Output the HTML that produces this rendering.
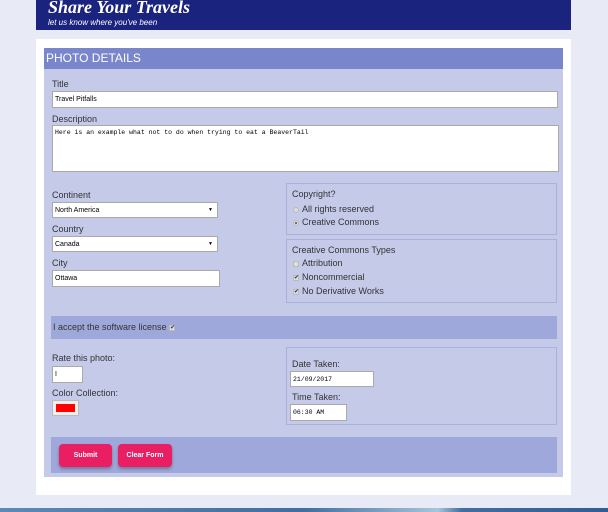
<!DOCTYPE html>
<html><head><meta charset="utf-8"><style>
*{margin:0;padding:0;box-sizing:border-box}
body{width:608px;height:512px;background:#e8eaf6;position:relative;overflow:hidden;font-family:"Liberation Sans",sans-serif;color:#333}
.a{position:absolute}
.lbl{position:absolute;font-size:9px;color:#333}
.inp{position:absolute;background:#fff;border:1px solid #aaa;font-size:7px;padding:0 2px;color:#000;display:flex;align-items:center}
.mono{font-family:"Liberation Mono",monospace;font-size:6.5px}
.ta{align-items:flex-start;padding-top:3px}
.fs{position:absolute;border:1px solid #aab0d8}
.opt{position:absolute;font-size:9px;color:#333}
.box{display:inline-block;width:6px;height:6px;background:#ddd;border:1px solid #bbb;margin-right:3px;vertical-align:middle;font-size:6px;line-height:5px;text-align:center}
.btn{position:absolute;background:#e91e63;color:#fff;font-size:7px;font-weight:bold;border-radius:4px;text-align:center;line-height:23px;box-shadow:0 2px 3px rgba(0,0,0,.3)}
.arr{position:absolute;right:4px;top:50%;transform:translateY(-50%);font-size:5px}
</style></head><body>
<div class="a" style="left:36px;top:0;width:535px;height:30px;background:#1a237e"></div>
<div class="a" style="left:48px;top:-3px;font:bold italic 18px 'Liberation Serif',serif;color:#fff">Share Your Travels</div>
<div class="a" style="left:48px;top:18px;font:italic 8px 'Liberation Sans',sans-serif;color:#fff">let us know where you've been</div>
<div class="a" style="left:36px;top:39px;width:535px;height:456px;background:#fff"></div>
<div class="a" style="left:44px;top:48px;width:519px;height:429px;background:#c5cae9"></div>
<div class="a" style="left:44px;top:48px;width:519px;height:21px;background:#7986cb;color:#fff;font-size:12px;line-height:21px;padding-left:2px">PHOTO DETAILS</div>
<div class="lbl" style="left:52px;top:79px">Title</div>
<div class="inp" style="left:52px;top:91px;width:506px;height:17px">Travel Pitfalls</div>
<div class="lbl" style="left:52px;top:114px">Description</div>
<div class="inp mono ta" style="left:52px;top:125px;width:507px;height:47px">Here is an example what not to do when trying to eat a BeaverTail</div>
<div class="lbl" style="left:52px;top:190px">Continent</div>
<div class="inp" style="left:52px;top:202px;width:166px;height:16px">North America<span class="arr">▼</span></div>
<div class="lbl" style="left:52px;top:224px">Country</div>
<div class="inp" style="left:52px;top:236px;width:166px;height:16px">Canada<span class="arr">▼</span></div>
<div class="lbl" style="left:52px;top:258px">City</div>
<div class="inp" style="left:52px;top:270px;width:168px;height:17px">Ottawa</div>
<div class="fs" style="left:286px;top:183px;width:271px;height:52px"></div>
<div class="lbl" style="left:292px;top:189px">Copyright?</div>
<div class="opt" style="left:293px;top:204px"><span class="box" style="border-radius:50%"></span>All rights reserved</div>
<div class="opt" style="left:293px;top:217px"><span class="box" style="border-radius:50%;background:radial-gradient(#555 30%,#ddd 40%)"></span>Creative Commons</div>
<div class="fs" style="left:286px;top:239px;width:271px;height:64px"></div>
<div class="lbl" style="left:292px;top:245px">Creative Commons Types</div>
<div class="opt" style="left:293px;top:258px"><span class="box"></span>Attribution</div>
<div class="opt" style="left:293px;top:272px"><span class="box">✔</span>Noncommercial</div>
<div class="opt" style="left:293px;top:286px"><span class="box">✔</span>No Derivative Works</div>
<div class="a" style="left:51px;top:316px;width:506px;height:23px;background:#9fa8da"></div>
<div class="opt" style="left:53px;top:322px">I accept the software license <span class="box">✔</span></div>
<div class="lbl" style="left:52px;top:353px">Rate this photo:</div>
<div class="inp" style="left:52px;top:366px;width:31px;height:17px">I</div>
<div class="lbl" style="left:52px;top:388px">Color Collection:</div>
<div class="a" style="left:52px;top:400px;width:27px;height:16px;background:#eee;border:1px solid #bbb"><div style="margin:3px;height:8px;background:#f00"></div></div>
<div class="fs" style="left:286px;top:347px;width:271px;height:78px"></div>
<div class="lbl" style="left:292px;top:359px">Date Taken:</div>
<div class="inp mono" style="left:290px;top:371px;width:84px;height:16px">21/09/2017</div>
<div class="lbl" style="left:292px;top:392px">Time Taken:</div>
<div class="inp mono" style="left:290px;top:404px;width:57px;height:17px">06:30 AM</div>
<div class="a" style="left:51px;top:437px;width:506px;height:36px;background:#9fa8da"></div>
<div class="btn" style="left:59px;top:444px;width:53px;height:23px">Submit</div>
<div class="btn" style="left:118px;top:444px;width:54px;height:23px">Clear Form</div>
<div class="a" style="left:0;top:508px;width:608px;height:4px;background:linear-gradient(90deg,#5a8ab8,#3f6fa0 50%,#a9c4dc 72%,#3f6fa0 76%,#2f5f90)"></div>
</body></html>
